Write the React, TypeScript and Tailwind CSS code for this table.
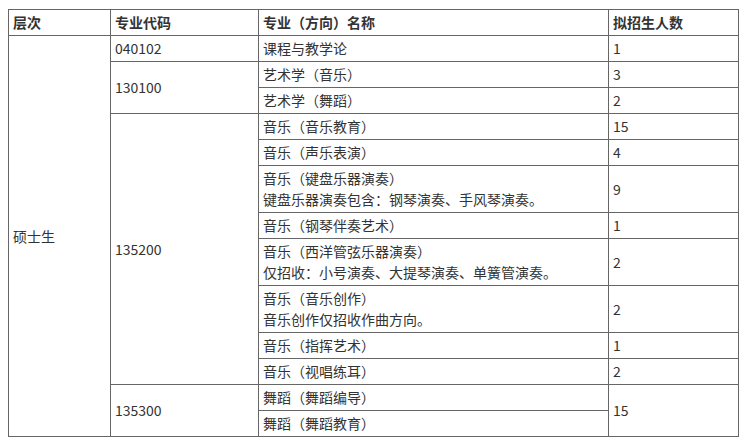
const cell =
  'border border-[#666] px-[4px] py-[2px] align-middle text-left leading-[21px]';

type Row = {
  code?: { text: string; span: number };
  name: string[];
  count?: { text: string; span: number };
};

const rows: Row[] = [
  { code: { text: '040102', span: 1 }, name: ['课程与教学论'], count: { text: '1', span: 1 } },
  { code: { text: '130100', span: 2 }, name: ['艺术学（音乐）'], count: { text: '3', span: 1 } },
  { name: ['艺术学（舞蹈）'], count: { text: '2', span: 1 } },
  { code: { text: '135200', span: 8 }, name: ['音乐（音乐教育）'], count: { text: '15', span: 1 } },
  { name: ['音乐（声乐表演）'], count: { text: '4', span: 1 } },
  {
    name: ['音乐（键盘乐器演奏）', '键盘乐器演奏包含：钢琴演奏、手风琴演奏。'],
    count: { text: '9', span: 1 },
  },
  { name: ['音乐（钢琴伴奏艺术）'], count: { text: '1', span: 1 } },
  {
    name: ['音乐（西洋管弦乐器演奏）', '仅招收：小号演奏、大提琴演奏、单簧管演奏。'],
    count: { text: '2', span: 1 },
  },
  { name: ['音乐（音乐创作）', '音乐创作仅招收作曲方向。'], count: { text: '2', span: 1 } },
  { name: ['音乐（指挥艺术）'], count: { text: '1', span: 1 } },
  { name: ['音乐（视唱练耳）'], count: { text: '2', span: 1 } },
  { code: { text: '135300', span: 2 }, name: ['舞蹈（舞蹈编导）'], count: { text: '15', span: 2 } },
  { name: ['舞蹈（舞蹈教育）'] },
];

export default function App() {
  return (
    <div
      className="min-h-[443px] w-[745px] bg-white pl-[8px] pt-[9px] text-[14px] text-[#333]"
      style={{ fontFamily: '"Noto Sans CJK SC", "Noto Sans", sans-serif' }}
    >
      <table className="w-[730px] table-fixed border-collapse">
        <colgroup>
          <col className="w-[102px]" />
          <col className="w-[148px]" />
          <col className="w-[350px]" />
          <col className="w-[130px]" />
        </colgroup>
        <thead>
          <tr>
            <th className={`${cell} font-bold`}>层次</th>
            <th className={`${cell} font-bold`}>专业代码</th>
            <th className={`${cell} font-bold`}>专业（方向）名称</th>
            <th className={`${cell} font-bold`}>拟招生人数</th>
          </tr>
        </thead>
        <tbody>
          {rows.map((r, i) => (
            <tr key={i}>
              {i === 0 ? (
                <td rowSpan={rows.length} className={cell}>
                  硕士生
                </td>
              ) : null}
              {r.code ? (
                <td rowSpan={r.code.span} className={cell}>
                  {r.code.text}
                </td>
              ) : null}
              <td className={cell}>
                {r.name.map((line) => (
                  <div key={line}>{line}</div>
                ))}
              </td>
              {r.count ? (
                <td rowSpan={r.count.span} className={cell}>
                  {r.count.text}
                </td>
              ) : null}
            </tr>
          ))}
        </tbody>
      </table>
    </div>
  );
}
